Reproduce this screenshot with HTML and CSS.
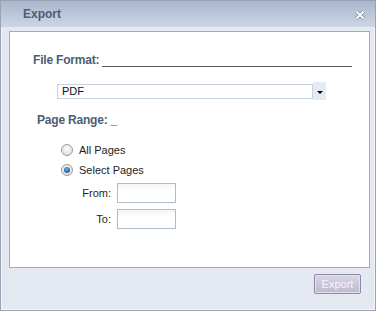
FILE: index.html
```html
<!DOCTYPE html>
<html lang="en">
<head>
    <meta charset="UTF-8">
    <title>Export</title>
    <link rel="stylesheet" href="styles.css">
</head>
<body>

<div class="dialog">
    <div class="titlebar">
        <span class="title">Export</span>
        <svg class="close" width="10" height="10" viewBox="0 0 10 10">
            <path d="M1.5 1.5 L8.5 8.5 M8.5 1.5 L1.5 8.5" stroke="#6f7d94" stroke-width="3.4"/>
            <path d="M1.5 1.5 L8.5 8.5 M8.5 1.5 L1.5 8.5" stroke="#ffffff" stroke-width="2"/>
        </svg>
    </div>

    <div class="panel">
        <!-- File format -->
        <div class="format-row">
            <span class="label">File Format:</span>
            <span class="rule"></span>
        </div>
        <div class="select-row">
            <div class="select">PDF</div>
            <div class="select-btn"><span class="arrow"></span></div>
        </div>

        <!-- Page range -->
        <div class="range-label label">Page Range: _</div>
        <div class="radio-row">
            <span class="radio"></span>
            <span>All Pages</span>
        </div>
        <div class="radio-row">
            <span class="radio checked"></span>
            <span>Select Pages</span>
        </div>
        <div class="pages">
            <span class="pages-label">From:</span>
            <span class="box"></span>
            <span class="pages-label">To:</span>
            <span class="box"></span>
        </div>
    </div>

    <div class="footer">
        <button class="btn" disabled>Export</button>
    </div>
</div>

</body>
</html>
```

FILE: styles.css
```css
body {
    margin: 0;
    background: #fff;
    font-family: "Liberation Sans", Arial, sans-serif;
    font-size: 11px;
    color: #1e1e1e;
}

.dialog {
    width: 376px;
    height: 311px;
    box-sizing: border-box;
    border: 1px solid #98a4b6;
    box-shadow: inset 0 0 0 1px #f3f5f9;
    background: #e3e8f1;
    display: flex;
    flex-direction: column;
}

.titlebar {
    height: 26px;
    border-bottom: 1px solid #e6ebf3;
    background: linear-gradient(#a8b6cd, #cdd6e4);
    display: flex;
    align-items: center;
    justify-content: space-between;
    padding: 0 10px 0 22px;
}

.title {
    font-weight: bold;
    font-size: 12px;
    color: #4e5d74;
}

.close {
    margin-top: 1px;
}

.panel {
    margin: 3px 5px 0 8px;
    height: 237px;
    box-sizing: border-box;
    border: 1px solid #a0abbb;
    background: #fff;
    padding: 20px 17px 0 23px;
}

.label {
    font-weight: bold;
    font-size: 12px;
    letter-spacing: -0.2px;
    color: #4e5d74;
    line-height: 14px;
}

.format-row {
    display: flex;
    align-items: flex-end;
    height: 15px;
}

.rule {
    flex: 1;
    margin-left: 3px;
    border-bottom: 1px solid #5a5a5a;
}

.select-row {
    display: flex;
    align-items: center;
    margin: 15px 0 0 24px;
    height: 18px;
}

.select {
    width: 256px;
    height: 15px;
    box-sizing: border-box;
    border: 1px solid #c6d3df;
    padding-left: 4px;
    line-height: 13px;
    color: #111;
}

.select-btn {
    width: 13px;
    height: 18px;
    background: #e6eaf2;
    display: flex;
    align-items: center;
    justify-content: center;
}

.arrow {
    width: 0;
    height: 0;
    border-left: 3px solid transparent;
    border-right: 3px solid transparent;
    border-top: 3px solid #000;
    margin-top: 2px;
}

.range-label {
    margin: 13px 0 0 4px;
}

.radio-row {
    display: flex;
    align-items: center;
    gap: 6px;
    height: 20px;
    margin-left: 28px;
}

.range-label + .radio-row {
    margin-top: 13px;
}

.radio {
    width: 12px;
    height: 12px;
    box-sizing: border-box;
    border-radius: 50%;
    border: 1px solid #9c9c9c;
    background: radial-gradient(circle at 50% 40%, #fdfdfd, #d6d6d6);
    display: flex;
    align-items: center;
    justify-content: center;
}

.radio.checked::after {
    content: "";
    width: 6px;
    height: 6px;
    border-radius: 50%;
    background: radial-gradient(circle at 45% 35%, #6fb6ea, #1a5d97 70%);
}

.pages {
    display: grid;
    grid-template-columns: 55px 59px;
    column-gap: 6px;
    row-gap: 6px;
    align-items: center;
    margin-top: 3px;
    margin-left: 23px;
}

.pages-label {
    text-align: right;
}

.box {
    height: 20px;
    box-sizing: border-box;
    border: 1px solid #adbccc;
    background: linear-gradient(#f3f6fa, #fff 40%);
}

.footer {
    display: flex;
    justify-content: flex-end;
    padding: 6px 14px 0 0;
}

.btn {
    width: 47px;
    height: 20px;
    border: 1px solid #8e8aa6;
    border-radius: 2px;
    box-shadow: inset 0 0 0 1px #e4e2ee;
    background: linear-gradient(#dad7e6, #bdb9cf);
    color: #f6f5fa;
    font-family: "Liberation Sans", Arial, sans-serif;
    font-size: 11px;
    padding: 0;
}
```
